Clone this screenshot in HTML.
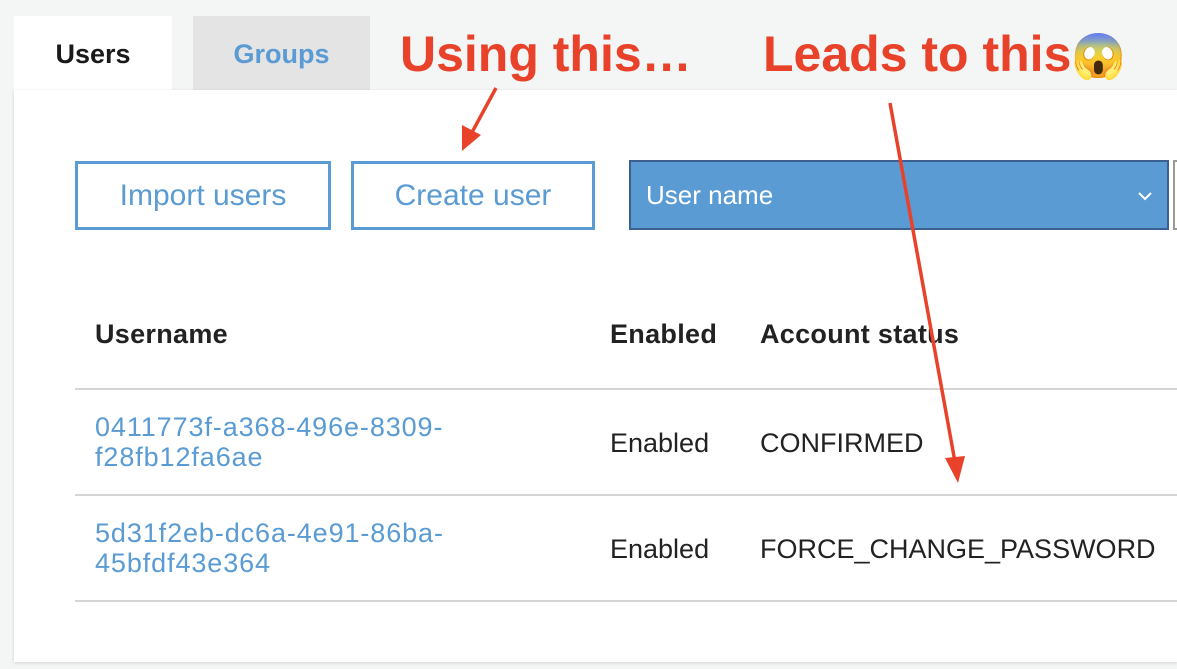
<!DOCTYPE html>
<html><head><style>
body{margin:0;width:1177px;height:669px;background:#f4f5f5;font-family:"Liberation Sans",Arial,sans-serif;position:relative;overflow:hidden}
.a{position:absolute}
.tab{top:16px;height:74px;font-weight:bold;font-size:27px;text-align:center;line-height:76px}
.btn{border:3px solid #5a9bd3;color:#5a9bd3;font-size:30px;text-align:center;box-sizing:border-box;height:69px;line-height:63px;top:161px;background:#fff}
.hd{font-weight:bold;font-size:27px;color:#222;top:319px;letter-spacing:0.3px}
.c{font-size:27px;color:#222}
.l{color:#5a9bd3;font-size:27px;line-height:30px;letter-spacing:0.9px}
.ln{left:75px;right:0;height:2px;background:#d5d5d5}
.red{color:#e8432a;font-weight:bold;font-size:50px}
</style></head><body>
<div class="a tab" style="left:14px;width:158px;background:#fff;color:#1a1a1a">Users</div>
<div class="a tab" style="left:193px;width:177px;background:#e5e4e5;color:#5a9bd3">Groups</div>
<div class="a" style="left:14px;top:90px;right:0;height:572px;background:#fff;box-shadow:0 1px 3px rgba(0,0,0,.15)"></div>
<div class="a btn" style="left:75px;width:256px">Import users</div>
<div class="a btn" style="left:351px;width:244px">Create user</div>
<div class="a" style="left:629px;top:160px;width:540px;height:70px;box-sizing:border-box;background:#5a9bd3;border:2px solid #3c6191;color:#fff;font-size:26px;line-height:66px;padding-left:15px">User name<svg style="position:absolute;right:14px;top:29px" width="16" height="10"><polyline points="2,2 8,8 14,2" fill="none" stroke="#fff" stroke-width="2"/></svg></div>
<div class="a" style="left:1173px;top:160px;width:10px;height:70px;border:2px solid #999;box-sizing:border-box"></div>
<div class="a hd" style="left:95px">Username</div>
<div class="a hd" style="left:610px">Enabled</div>
<div class="a hd" style="left:760px">Account status</div>
<div class="a ln" style="top:388px"></div>
<div class="a l" style="left:95px;top:412px">0411773f-a368-496e-8309-<br>f28fb12fa6ae</div>
<div class="a c" style="left:610px;top:428px">Enabled</div>
<div class="a c" style="left:760px;top:428px">CONFIRMED</div>
<div class="a ln" style="top:494px"></div>
<div class="a l" style="left:95px;top:518px">5d31f2eb-dc6a-4e91-86ba-<br>45bfdf43e364</div>
<div class="a c" style="left:610px;top:534px">Enabled</div>
<div class="a c" style="left:760px;top:534px">FORCE_CHANGE_PASSWORD</div>
<div class="a ln" style="top:600px"></div>
<div class="a red" style="left:400px;top:25px">Using this…</div>
<div class="a red" style="left:763px;top:25px">Leads to this<span style="font-size:44px;font-family:'Noto Color Emoji',sans-serif">😱</span></div>
<svg class="a" style="left:0;top:0" width="1177" height="669">
<line x1="496" y1="88" x2="470" y2="136" stroke="#e8432a" stroke-width="3.5"/>
<polygon points="462,151 462,125 481,135" fill="#e8432a"/>
<line x1="890" y1="103" x2="955" y2="462" stroke="#e8432a" stroke-width="3.5"/>
<polygon points="958,483 945,458 965,456" fill="#e8432a"/>
</svg>
</body></html>
